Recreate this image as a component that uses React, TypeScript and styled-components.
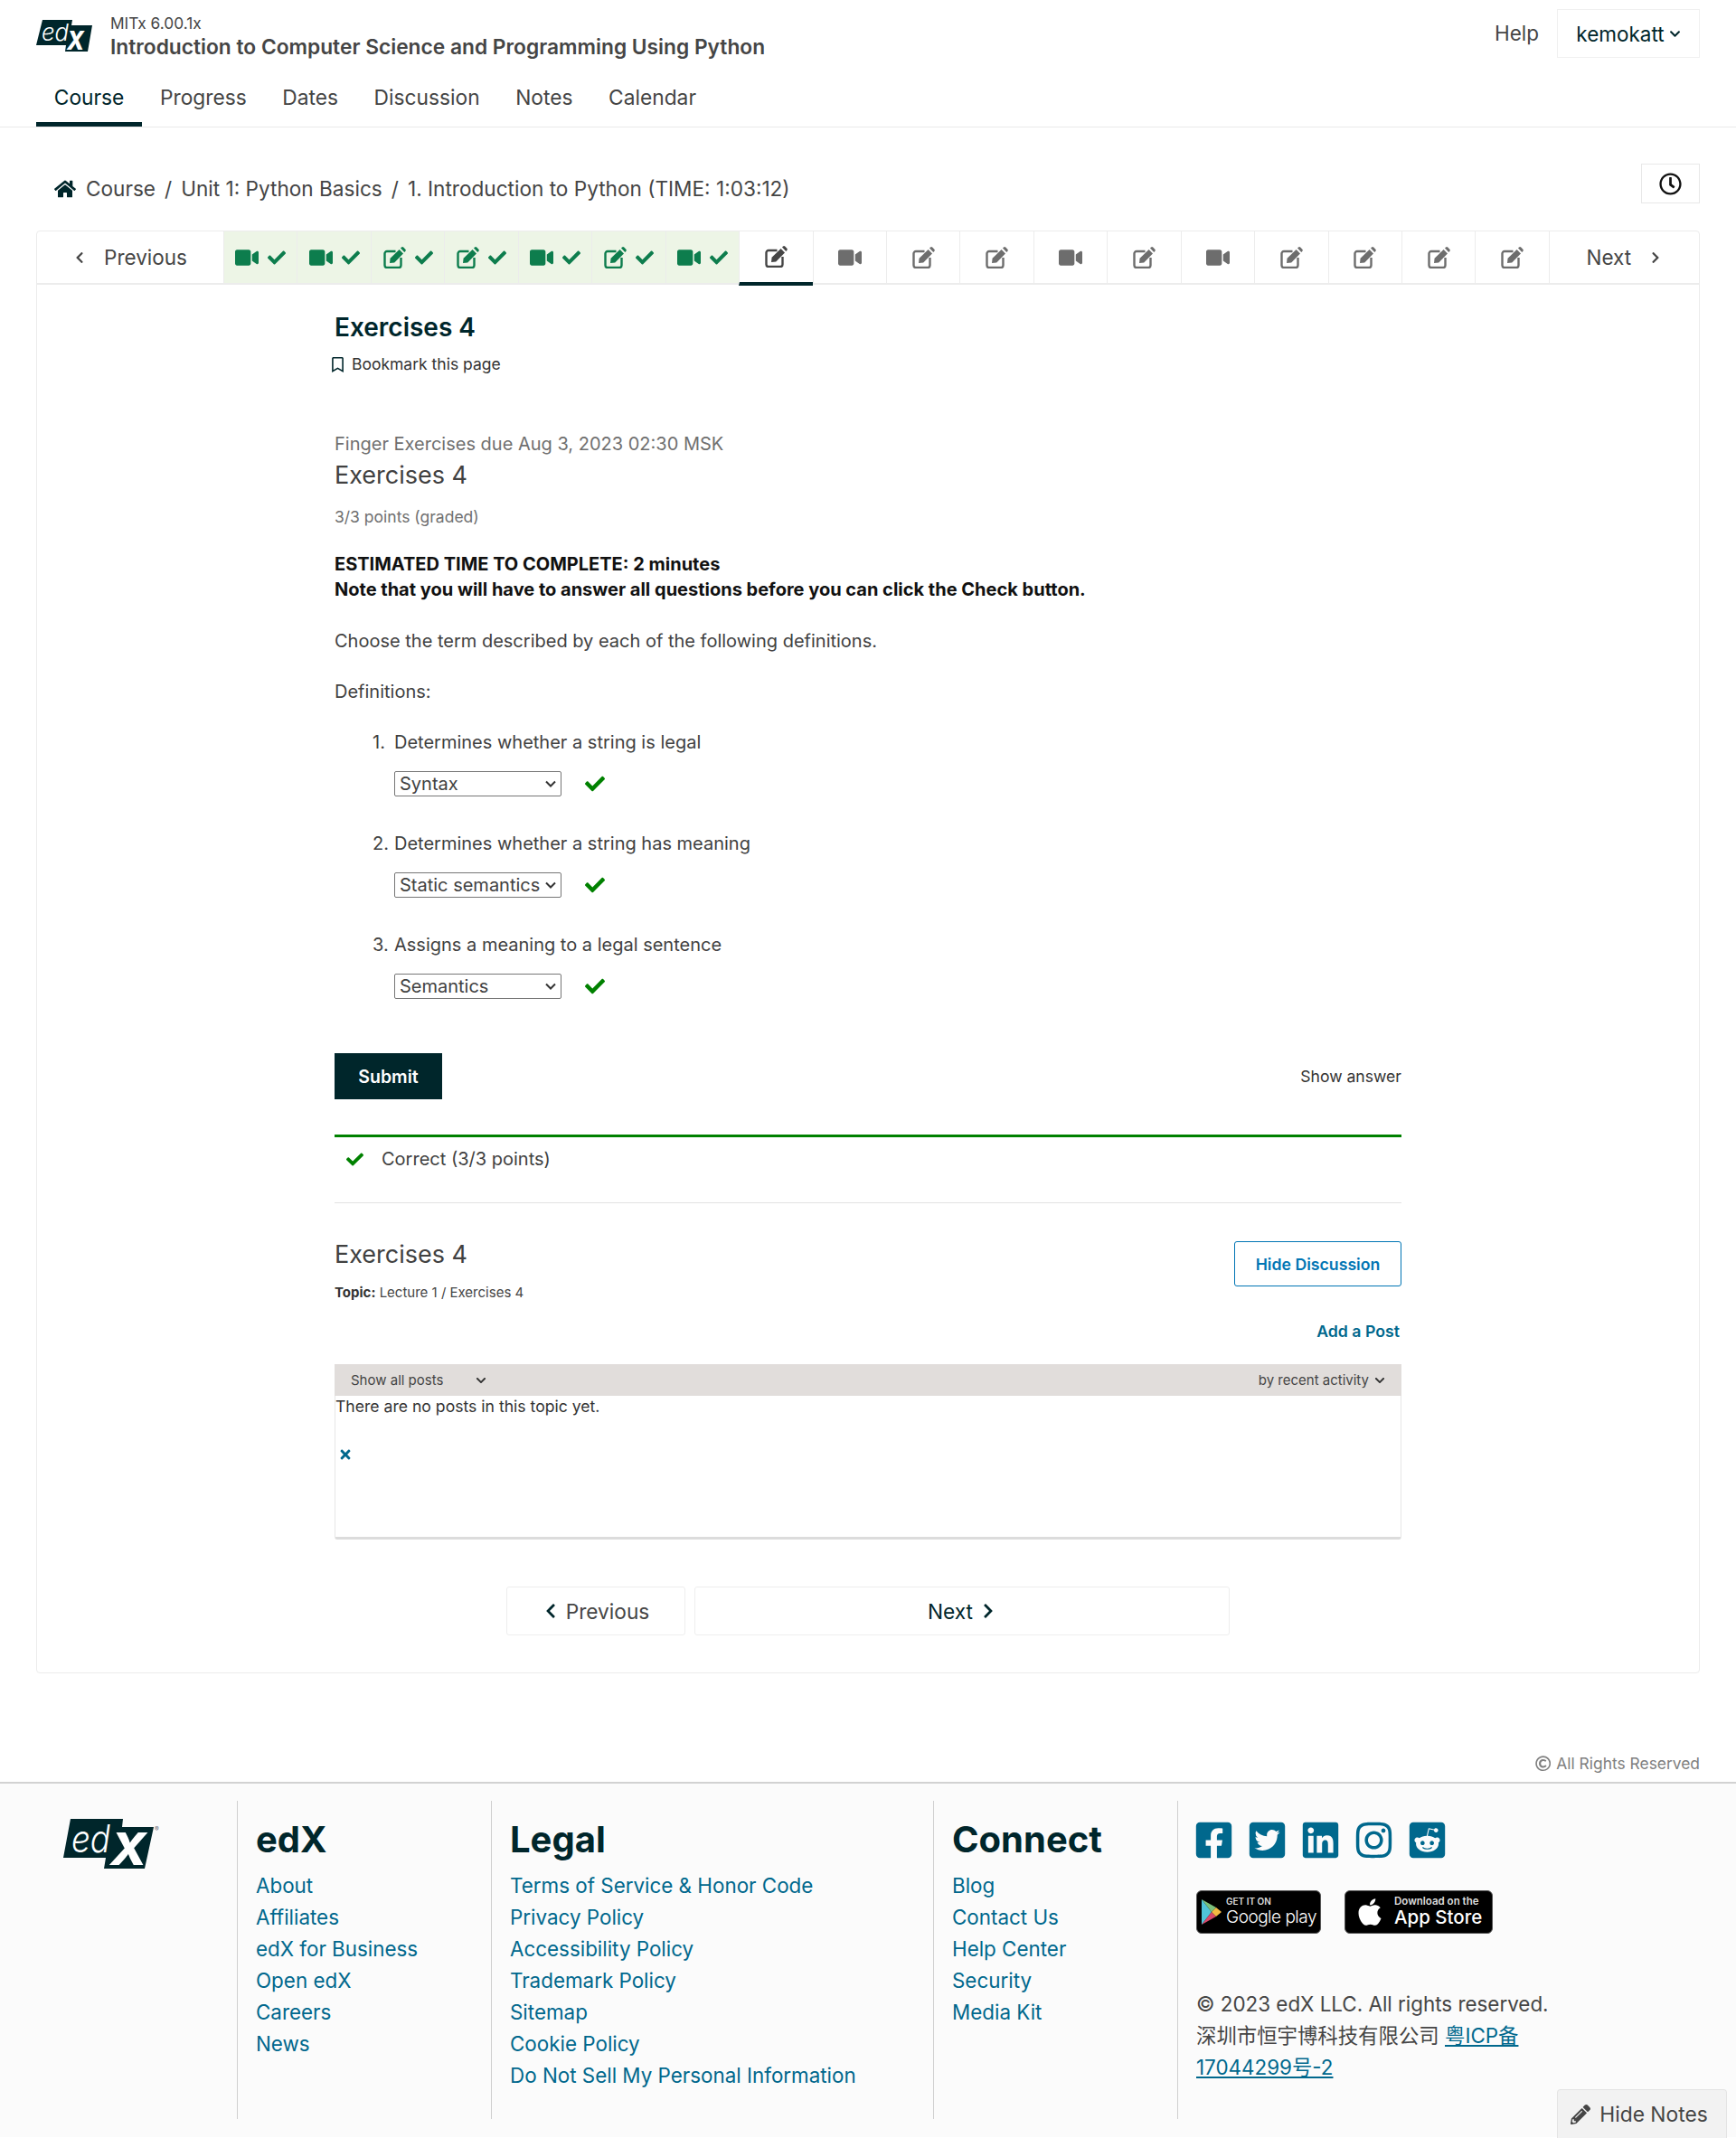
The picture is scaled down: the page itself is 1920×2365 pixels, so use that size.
import React from "react";
import styled, { createGlobalStyle } from "styled-components";
import {
  FaApple,
  FaCheck,
  FaChevronDown,
  FaChevronLeft,
  FaChevronRight,
  FaFacebookSquare,
  FaHome,
  FaInstagram,
  FaLinkedin,
  FaPencilAlt,
  FaRedditSquare,
  FaRegBookmark,
  FaRegClock,
  FaRegCopyright,
  FaTimes,
  FaTwitterSquare,
  FaVideo,
} from "react-icons/fa";

const INK = "#00262b";
const LINK = "#00688d";

const GlobalStyle = createGlobalStyle`
  * { box-sizing: border-box; }
  html, body { margin: 0; padding: 0; background: #fff; }
  body {
    font-family: Inter, "Noto Sans CJK SC", "Liberation Sans", sans-serif;
    color: #454545;
    font-size: 20px;
  }
`;

const Header = styled.header`
  height: 141px;
  border-bottom: 1px solid #eaeaea;
  padding: 0 40px;
`;
const TopRow = styled.div`
  display: flex;
  justify-content: space-between;
  height: 76px;
`;
const Brand = styled.div`
  display: flex;
  gap: 20px;
  padding-top: 15px;
`;
const LogoSlot = styled.div`
  padding-top: 7px;
`;
const CourseOrg = styled.div`
  font-size: 17.3px;
  line-height: 22px;
  color: #454545;
`;
const CourseTitle = styled.div`
  font-size: 22.75px;
  line-height: 30px;
  font-weight: 600;
  color: #454545;
`;
const UserArea = styled.div`
  display: flex;
  align-items: flex-start;
  gap: 20px;
  padding-top: 10px;
`;
const HelpLink = styled.span`
  font-size: 22.5px;
  line-height: 54px;
  color: #454545;
`;
const UserButton = styled.div`
  width: 158px;
  height: 54px;
  display: flex;
  align-items: center;
  justify-content: center;
  gap: 5px;
  border: 1px solid #f0f0f0;
  font-size: 22.5px;
  color: ${INK};
  svg { font-size: 13px; }
`;
const Tabs = styled.nav`
  display: flex;
  height: 64px;
`;
const Tab = styled.div<{ $active?: boolean }>`
  padding: 5px 19.8px 0;
  line-height: 54px;
  font-size: 22.75px;
  color: ${(p) => (p.$active ? INK : "#454545")};
  border-bottom: 5px solid ${(p) => (p.$active ? INK : "transparent")};
`;

const CrumbRow = styled.div`
  display: flex;
  justify-content: space-between;
  align-items: flex-start;
  padding: 40px 40px 30px;
`;
const Crumbs = styled.div`
  display: flex;
  align-items: center;
  padding: 13px 0 0 20px;
  line-height: 30px;
  font-size: 22.6px;
  color: #454545;
  svg { font-size: 24px; color: ${INK}; margin-right: 11px; }
`;
const CrumbSep = styled.span`
  margin: 0 10px;
`;
const ClockButton = styled.div`
  width: 65px;
  height: 44px;
  display: flex;
  align-items: center;
  justify-content: center;
  border: 1px solid #e8e8e8;
  color: #111;
  font-size: 25px;
`;

const Card = styled.main`
  margin: 0 40px;
  border: 1px solid #ececec;
  border-radius: 4px;
  padding-bottom: 41px;
`;
const SeqBar = styled.div`
  display: flex;
  height: 59px;
  border-bottom: 2px solid #ececec;
`;
const SeqArrow = styled.div<{ $width: number; $ruled?: boolean }>`
  width: ${(p) => p.$width}px;
  flex-shrink: 0;
  display: flex;
  align-items: center;
  justify-content: center;
  gap: 20px;
  font-size: 22.5px;
  color: #454545;
  border-left: ${(p) => (p.$ruled ? "1px solid #ececec" : "0")};
  svg { font-size: 14px; }
`;
const SeqTab = styled.div<{ $done?: boolean; $current?: boolean }>`
  flex: 1;
  display: flex;
  align-items: center;
  justify-content: center;
  gap: 10px;
  height: ${(p) => (p.$current ? "60px" : "57px")};
  border-left: 1px solid #ececec;
  background: ${(p) => (p.$done ? "#edf5e6" : "#fff")};
  color: ${(p) => (p.$done ? "#0d7d4d" : "#6d6d6d")};
  border-bottom: ${(p) => (p.$current ? `4px solid ${INK}` : "none")};
  font-size: 26px;
  ${(p) => p.$current && "color: #454545;"}
`;
const TinyCheck = styled(FaCheck)`
  font-size: 20px;
`;

const Content = styled.div`
  width: 1180px;
  margin: 0 auto;
`;
const UnitTitle = styled.h1`
  margin: 29px 0 0;
  font-size: 28px;
  line-height: 36px;
  font-weight: 600;
  color: ${INK};
`;
const Bookmark = styled.div`
  display: flex;
  align-items: center;
  margin: 11px 0 0 -5px;
  line-height: 24px;
  font-size: 17.5px;
  gap: 7px;
  color: #333;
  svg { font-size: 17px; color: ${INK}; }
`;
const DueLine = styled.div`
  margin-top: 62px;
  line-height: 28px;
  color: #707070;
`;
const ProblemTitle = styled.h2`
  margin: 3px 0 0;
  font-size: 27px;
  line-height: 36px;
  font-weight: 400;
  color: #414141;
`;
const Points = styled.div`
  margin-top: 16px;
  font-size: 17.5px;
  line-height: 24px;
  color: #707070;
`;
const Strong = styled.div`
  margin-top: 26px;
  line-height: 28px;
  font-weight: 700;
  color: #111;
`;
const Para = styled.p<{ $top: number }>`
  margin: ${(p) => p.$top}px 0 0;
  line-height: 28px;
  color: #414141;
`;
const Definition = styled.div`
  display: grid;
  grid-template-columns: 24px 1fr;
  margin: 28px 0 38px 42px;
  line-height: 28px;
  color: #414141;
`;
const AnswerRow = styled.div`
  grid-column: 2;
  display: flex;
  align-items: center;
  gap: 26px;
  margin-top: 18px;
  height: 28px;
`;
const Answer = styled.select`
  appearance: none;
  width: 185px;
  height: 28px;
  padding: 0 22px 0 5px;
  font-family: Inter, sans-serif;
  font-size: 20px;
  color: #414141;
  background: #fff url("data:image/svg+xml,%3Csvg xmlns='http://www.w3.org/2000/svg' width='12' height='8'%3E%3Cpath d='M1 1.5l5 5 5-5' fill='none' stroke='%23333' stroke-width='2'/%3E%3C/svg%3E") no-repeat right 5px center;
  border: 1px solid #767676;
  border-radius: 2px;
`;
const Good = styled(FaCheck)`
  font-size: 22px;
  color: #008100;
`;
const Actions = styled.div`
  display: flex;
  justify-content: space-between;
  align-items: center;
  margin-top: 60px;
  font-size: 17.6px;
  color: #333;
`;
const Submit = styled.button`
  width: 119px;
  height: 51px;
  border: 0;
  background: ${INK};
  color: #fff;
  font: 600 19.5px Inter, sans-serif;
`;
const Result = styled.div`
  display: flex;
  align-items: center;
  gap: 20px;
  margin-top: 39px;
  border-top: 3px solid #008100;
  padding: 10px 0 34px 13px;
  line-height: 28px;
  border-bottom: 1px solid #e2e2e2;
  color: #414141;
  svg { font-size: 19px; }
`;
const DiscussionHead = styled.div`
  display: flex;
  justify-content: space-between;
  align-items: flex-start;
  margin-top: 39px;
`;
const DiscussionTitle = styled.div`
  font-size: 27px;
  line-height: 36px;
  color: #414141;
`;
const Topic = styled.div`
  margin-top: 14px;
  font-size: 15px;
  line-height: 20px;
  color: #454545;
  b { font-weight: 700; color: #333; }
`;
const HideDiscussion = styled.div`
  width: 185px;
  height: 50px;
  margin-top: 3px;
  display: flex;
  align-items: center;
  justify-content: center;
  border: 1px solid #0075b4;
  border-radius: 3px;
  font-size: 17.7px;
  font-weight: 600;
  color: #0075b4;
`;
const AddPost = styled.div`
  margin-top: 21px;
  text-align: right;
  padding-right: 2px;
  font-size: 17.7px;
  line-height: 24px;
  font-weight: 600;
  color: ${LINK};
`;
const Threads = styled.div`
  margin-top: 24px;
  height: 194px;
  border: 1px solid #e6e6e6;
  border-bottom: 3px solid #dcdcdc;
  border-radius: 3px;
`;
const ThreadBar = styled.div`
  display: flex;
  justify-content: space-between;
  align-items: center;
  height: 35px;
  margin: -1px -1px 0;
  padding: 0 18px;
  background: #e1dddb;
  font-size: 15px;
  color: #454545;
  svg { font-size: 12px; color: #333; }
`;
const ThreadFilter = styled.span<{ $gap: number }>`
  display: flex;
  align-items: center;
  gap: ${(p) => p.$gap}px;
`;
const NoPosts = styled.div`
  font-size: 17.6px;
  line-height: 24px;
  color: #333;
`;
const Dismiss = styled.div`
  margin: 29px 0 0 3px;
  height: 24px;
  display: flex;
  align-items: center;
  font-size: 16px;
  color: ${LINK};
`;
const BottomNav = styled.div`
  display: flex;
  justify-content: center;
  gap: 10px;
  margin: 52px 190px 0;
`;
const BottomButton = styled.div<{ $wide?: boolean }>`
  width: ${(p) => (p.$wide ? "592px" : "198px")};
  height: 54px;
  display: flex;
  align-items: center;
  justify-content: center;
  gap: 8px;
  border: 1px solid #eeeeee;
  border-radius: 3px;
  font-size: 22.7px;
  color: ${(p) => (p.$wide ? INK : "#454545")};
  svg { font-size: 18px; color: ${INK}; }
`;

const Rights = styled.div`
  display: flex;
  justify-content: flex-end;
  align-items: center;
  gap: 6px;
  margin-top: 88px;
  padding-right: 40px;
  font-size: 17.4px;
  line-height: 24px;
  color: #808080;
`;
const Footer = styled.footer`
  margin-top: 8px;
  height: 393px;
  border-top: 2px solid #d2d2d2;
  padding-top: 19px;
  background: #fbfbfb;
  display: flex;
`;
const LogoCol = styled.div`
  width: 262px;
  padding: 20px 0 0 70px;
`;
const FootCol = styled.div<{ $width: number }>`
  width: ${(p) => p.$width}px;
  height: 352px;
  border-left: 1px solid #cfcfcf;
  padding: 20px 0 0 20px;
`;
const FootHeading = styled.h3`
  margin: 0 0 10px;
  font-size: 40px;
  line-height: 46px;
  font-weight: 700;
  color: ${INK};
`;
const FootLink = styled.a`
  display: block;
  font-size: 22.4px;
  line-height: 35px;
  color: ${LINK};
`;
const SideCol = styled.div`
  flex: 1;
  border-left: 1px solid #cfcfcf;
  height: 352px;
  padding: 23px 0 0 20px;
`;
const Social = styled.div`
  display: flex;
  gap: 14px;
  height: 40px;
  margin-left: -3px;
  font-size: 45px;
  color: ${LINK};
  align-items: center;
  svg { display: block; }
`;
const Stores = styled.div`
  display: flex;
  gap: 26px;
  margin-top: 36px;
`;
const StoreBadge = styled.div<{ $width: number; $pad: number }>`
  width: ${(p) => p.$width}px;
  height: 48px;
  display: flex;
  align-items: center;
  gap: ${(p) => p.$pad}px;
  padding-left: ${(p) => p.$pad}px;
  background: #000;
  border: 1px solid #555;
  border-radius: 6px;
  color: #fff;
  > svg { flex-shrink: 0; }
`;
const AppleMark = styled(FaApple)`
  font-size: 34px;
`;
const BadgeStack = styled.div`
  display: flex;
  flex-direction: column;
`;
const BadgeSmall = styled.span<{ $size: number }>`
  font-size: ${(p) => p.$size}px;
  line-height: 12px;
  font-weight: 600;
  color: #ddd;
`;
const BadgeBig = styled.span<{ $size: number; $light?: boolean }>`
  font-size: ${(p) => p.$size}px;
  line-height: 24px;
  white-space: nowrap;
  font-weight: ${(p) => (p.$light ? 300 : 500)};
  letter-spacing: ${(p) => (p.$light ? "-0.5px" : "0")};
`;
const Legal = styled.div`
  margin-top: 60px;
  width: 395px;
  font-size: 22.4px;
  line-height: 35px;
  color: #454545;
  a { color: ${LINK}; text-decoration: underline; }
`;
const HideNotes = styled.div`
  position: fixed;
  right: 10px;
  bottom: 0;
  width: 188px;
  height: 54px;
  padding-right: 6px;
  display: flex;
  align-items: center;
  justify-content: center;
  gap: 10px;
  background: #f2f2f2;
  border: 1px solid #e4e4e4;
  border-bottom: 0;
  border-radius: 4px 4px 0 0;
  font-size: 22.8px;
  color: #454545;
  svg { font-size: 22px; }
`;

// header logo, 62x35
const EdxSmall = () => (
  <svg width="62" height="35" viewBox="0 0 62 35" overflow="visible" aria-label="edX">
    <polygon points="7,0 40,0 39,6 62,6 57,35 32,35 33,28 0,28" fill="#00262b" />
    <text x="6" y="23" fontFamily="Inter" fontStyle="italic" fontWeight="300" fontSize="26" textLength="30" lengthAdjust="spacingAndGlyphs" fill="#fff">ed</text>
    <text x="34" y="33" fontFamily="Inter" fontStyle="italic" fontWeight="800" fontSize="29" textLength="19" lengthAdjust="spacingAndGlyphs" fill="#fff">X</text>
  </svg>
);

// footer logo, has the registered mark
const EdxLarge = () => (
  <svg width="112" height="56" viewBox="0 0 112 56" overflow="visible" aria-label="edX">
    <polygon points="8,0 66,0 65,9 100,9 90,55 45,55 47,43 0,43" fill="#00262b" />
    <text x="9" y="37" fontFamily="Inter" fontStyle="italic" fontWeight="300" fontSize="42" textLength="43" lengthAdjust="spacingAndGlyphs" fill="#fff">ed</text>
    <text x="52" y="51" fontFamily="Inter" fontStyle="italic" fontWeight="800" fontSize="50" textLength="40" lengthAdjust="spacingAndGlyphs" fill="#fff">X</text>
    <text x="101" y="14" fontFamily="Inter" fontSize="7" fill="#667">®</text>
  </svg>
);

// pencil-square-o: heavier than the FA5 regular edit icon
const EditIcon = () => (
  <svg width="25" height="24" viewBox="0 0 25 24" fill="currentColor">
    <path
      d="M13.5 5H4a2.5 2.5 0 0 0-2.5 2.5v13A2.5 2.5 0 0 0 4 23h13a2.5 2.5 0 0 0 2.5-2.5V12"
      fill="none"
      stroke="currentColor"
      strokeWidth="2.4"
    />
    <polygon points="7,18 7.6,12.8 17.6,3 22,7.5 12.2,17.4" />
    <path d="M19 1.6 20 .6a1.6 1.6 0 0 1 2.2 0l2.1 2.1a1.6 1.6 0 0 1 0 2.2l-1 1z" />
  </svg>
);

const PlayMark = () => (
  <svg width="22" height="28" viewBox="0 0 22 28">
    <polygon points="0,0 11,14 0,28" fill="#4fc3d8" />
    <polygon points="0,0 16,9 11,14" fill="#7ac07c" />
    <polygon points="0,28 16,19 11,14" fill="#d8486a" />
    <polygon points="16,9 22,14 16,19 11,14" fill="#f4b942" />
  </svg>
);

const completed = ["v", "v", "e", "e", "v", "e", "v"];
const upcoming = ["v", "e", "e", "v", "e", "v", "e", "e", "e", "e"];

const definitions = [
  { text: "Determines whether a string is legal", answer: "Syntax" },
  { text: "Determines whether a string has meaning", answer: "Static semantics" },
  { text: "Assigns a meaning to a legal sentence", answer: "Semantics" },
];

const footerEdx = ["About", "Affiliates", "edX for Business", "Open edX", "Careers", "News"];
const footerLegal = [
  "Terms of Service & Honor Code",
  "Privacy Policy",
  "Accessibility Policy",
  "Trademark Policy",
  "Sitemap",
  "Cookie Policy",
  "Do Not Sell My Personal Information",
];
const footerConnect = ["Blog", "Contact Us", "Help Center", "Security", "Media Kit"];

const App = () => {
  return (
    <>
      <GlobalStyle />
      <Header>
        <TopRow>
          <Brand>
            <LogoSlot>
              <EdxSmall />
            </LogoSlot>
            <div>
              <CourseOrg>MITx 6.00.1x</CourseOrg>
              <CourseTitle>Introduction to Computer Science and Programming Using Python</CourseTitle>
            </div>
          </Brand>
          <UserArea>
            <HelpLink>Help</HelpLink>
            <UserButton>
              kemokatt <FaChevronDown />
            </UserButton>
          </UserArea>
        </TopRow>
        <Tabs>
          <Tab $active>Course</Tab>
          <Tab>Progress</Tab>
          <Tab>Dates</Tab>
          <Tab>Discussion</Tab>
          <Tab>Notes</Tab>
          <Tab>Calendar</Tab>
        </Tabs>
      </Header>

      <CrumbRow>
        <Crumbs>
          <FaHome />
          Course
          <CrumbSep>/</CrumbSep>
          Unit 1: Python Basics
          <CrumbSep>/</CrumbSep>
          1. Introduction to Python (TIME: 1:03:12)
        </Crumbs>
        <ClockButton>
          <FaRegClock />
        </ClockButton>
      </CrumbRow>

      <Card>
        <SeqBar>
          <SeqArrow $width={206}>
            <FaChevronLeft /> Previous
          </SeqArrow>
          {completed.map((kind, i) => (
            <SeqTab key={i} $done>
              {kind === "v" ? <FaVideo /> : <EditIcon />}
              <TinyCheck />
            </SeqTab>
          ))}
          <SeqTab $current>
            <EditIcon />
          </SeqTab>
          {upcoming.map((kind, i) => (
            <SeqTab key={i}>{kind === "v" ? <FaVideo /> : <EditIcon />}</SeqTab>
          ))}
          <SeqArrow $width={166} $ruled>
            Next <FaChevronRight />
          </SeqArrow>
        </SeqBar>

        <Content>
          <UnitTitle>Exercises 4</UnitTitle>
          <Bookmark>
            <FaRegBookmark /> Bookmark this page
          </Bookmark>
          <DueLine>Finger Exercises due Aug 3, 2023 02:30 MSK</DueLine>
          <ProblemTitle>Exercises 4</ProblemTitle>
          <Points>3/3 points (graded)</Points>
          <Strong>
            ESTIMATED TIME TO COMPLETE: 2 minutes
            <br />
            Note that you will have to answer all questions before you can click the Check button.
          </Strong>
          <Para $top={29}>Choose the term described by each of the following definitions.</Para>
          <Para $top={28}>Definitions:</Para>
          {definitions.map((d, i) => (
            <Definition key={d.text}>
              <span>{i + 1}.</span>
              <span>{d.text}</span>
              <AnswerRow>
                <Answer defaultValue={d.answer}>
                  <option>{d.answer}</option>
                </Answer>
                <Good />
              </AnswerRow>
            </Definition>
          ))}
          <Actions>
            <Submit>Submit</Submit>
            <span>Show answer</span>
          </Actions>
          <Result>
            <Good />
            Correct (3/3 points)
          </Result>
          <DiscussionHead>
            <div>
              <DiscussionTitle>Exercises 4</DiscussionTitle>
              <Topic>
                <b>Topic:</b> Lecture 1 / Exercises 4
              </Topic>
            </div>
            <HideDiscussion>Hide Discussion</HideDiscussion>
          </DiscussionHead>
          <AddPost>Add a Post</AddPost>
          <Threads>
            <ThreadBar>
              <ThreadFilter $gap={36}>
                Show all posts <FaChevronDown />
              </ThreadFilter>
              <ThreadFilter $gap={6}>
                by recent activity <FaChevronDown />
              </ThreadFilter>
            </ThreadBar>
            <NoPosts>There are no posts in this topic yet.</NoPosts>
            <Dismiss>
              <FaTimes />
            </Dismiss>
          </Threads>
          <BottomNav>
            <BottomButton>
              <FaChevronLeft /> Previous
            </BottomButton>
            <BottomButton $wide>
              Next <FaChevronRight />
            </BottomButton>
          </BottomNav>
        </Content>
      </Card>

      <Rights>
        <FaRegCopyright /> All Rights Reserved
      </Rights>
      <Footer>
        <LogoCol>
          <EdxLarge />
        </LogoCol>
        <FootCol $width={281}>
          <FootHeading>edX</FootHeading>
          {footerEdx.map((l) => (
            <FootLink key={l}>{l}</FootLink>
          ))}
        </FootCol>
        <FootCol $width={489}>
          <FootHeading>Legal</FootHeading>
          {footerLegal.map((l) => (
            <FootLink key={l}>{l}</FootLink>
          ))}
        </FootCol>
        <FootCol $width={270}>
          <FootHeading>Connect</FootHeading>
          {footerConnect.map((l) => (
            <FootLink key={l}>{l}</FootLink>
          ))}
        </FootCol>
        <SideCol>
          <Social>
            <FaFacebookSquare />
            <FaTwitterSquare />
            <FaLinkedin />
            <FaInstagram />
            <FaRedditSquare />
          </Social>
          <Stores>
            <StoreBadge $width={138} $pad={5}>
              <PlayMark />
              <BadgeStack>
                <BadgeSmall $size={10}>GET IT ON</BadgeSmall>
                <BadgeBig $size={19} $light>
                  Google play
                </BadgeBig>
              </BadgeStack>
            </StoreBadge>
            <StoreBadge $width={164} $pad={10}>
              <AppleMark />
              <BadgeStack>
                <BadgeSmall $size={11.5}>Download on the</BadgeSmall>
                <BadgeBig $size={20.5}>App Store</BadgeBig>
              </BadgeStack>
            </StoreBadge>
          </Stores>
          <Legal>
            © 2023 edX LLC. All rights reserved. 深圳市恒宇博科技有限公司 <a>粤ICP备</a> <a>17044299号-2</a>
          </Legal>
        </SideCol>
      </Footer>
      <HideNotes>
        <FaPencilAlt /> Hide Notes
      </HideNotes>
    </>
  );
};

export default App;
